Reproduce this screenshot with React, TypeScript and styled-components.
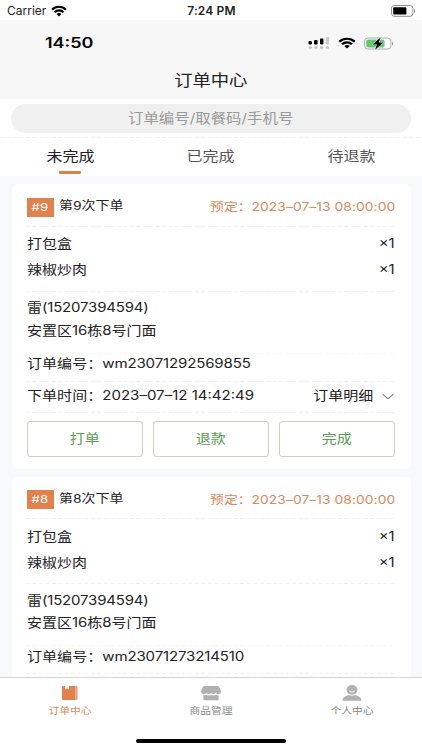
import React from 'react';
import styled, { createGlobalStyle } from 'styled-components';

const Global = createGlobalStyle`
  * { box-sizing: border-box; }
  body { margin: 0; background: #fff; overflow: hidden; }
`;

const Screen = styled.div`
  width: 422px;
  height: 750px;
  display: flex;
  flex-direction: column;
  overflow: hidden;
  background: #fff;
  color: #222;
  font-family: Inter, 'Noto Sans CJK SC', sans-serif;
`;

/* Wide lettering: glyphs are stretched sideways from the given edge. */
const Text = styled.span<{
  $size?: number; $x?: number; $from?: string; $color?: string; $weight?: number; $track?: number;
}>`
  display: inline-block;
  flex: none;
  white-space: pre;
  line-height: 1;
  font-size: ${p => p.$size ?? 12.8}px;
  color: ${p => p.$color ?? '#222'};
  font-weight: ${p => p.$weight ?? 400};
  letter-spacing: ${p => p.$track ?? 0}px;
  transform: scaleX(${p => p.$x ?? 1.17});
  transform-origin: ${p => p.$from ?? 'left'} center;
`;

const Latin = styled.span<{ $track?: number }>`
  letter-spacing: ${p => p.$track ?? 0}px;
`;

const DeviceBar = styled.div`
  height: 20px;
  flex: none;
  display: grid;
  grid-template-columns: 1fr 1fr 1fr;
  align-items: center;
  padding: 1px 6px 0 7px;
`;
const DeviceLeft = styled.div`display: flex; align-items: center; gap: 5px;`;
const DeviceCenter = styled.div`display: flex; justify-content: center;`;
const DeviceRight = styled.div`display: flex; justify-content: flex-end;`;

const Header = styled.header`
  height: 79px;
  flex: none;
  background: #f7f7f7;
`;
const PhoneBar = styled.div`
  height: 46px;
  display: flex;
  align-items: center;
  justify-content: space-between;
  padding: 0 28px 0 45px;
`;
const PhoneIcons = styled.div`display: flex; align-items: center; gap: 8px;`;
const Title = styled.div`
  height: 28.5px;
  display: flex;
  align-items: center;
  justify-content: center;
`;

const SearchArea = styled.div`
  height: 38px;
  flex: none;
  padding: 5px 11px 0;
`;
const Search = styled.div`
  height: 29px;
  border-radius: 15px;
  background: #f0f0f0;
  display: flex;
  align-items: center;
  justify-content: center;
`;

const Dashed = styled.div<{ $color?: string }>`
  height: 1px;
  flex: none;
  background: repeating-linear-gradient(90deg, ${p => p.$color ?? '#f0f0f0'} 0 4px, #fff 4px 6.5px);
`;

const Tabs = styled.nav`
  height: 38px;
  flex: none;
  display: grid;
  grid-template-columns: repeat(3, 1fr);
`;
const Tab = styled.div`
  display: flex;
  flex-direction: column;
  align-items: center;
  padding-top: 12px;
`;
const Underline = styled.i`
  width: 22px;
  height: 3px;
  border-radius: 1px;
  margin-top: 7.3px;
  background: #d8804e;
`;

const List = styled.main`
  height: 501px;
  flex: none;
  overflow: hidden;
  background: #f8f9fb;
  padding: 8px 11.5px 0;
  display: flex;
  flex-direction: column;
  gap: 8px;
`;
const Card = styled.section`
  height: 284.6px;
  flex: none;
  background: #fff;
  border-radius: 6px;
  padding: 0 15.5px;
`;
const Rule = styled(Dashed)`margin: 0 0 0 -1px;`;
const Row = styled.div<{ $h: number; $lift?: number }>`
  height: ${p => p.$h}px;
  padding-bottom: ${p => p.$lift ?? 0}px;
  display: flex;
  align-items: center;
  justify-content: space-between;
`;
const CardHead = styled.div`
  height: 41.5px;
  padding-top: 5px;
  display: flex;
  align-items: center;
  justify-content: space-between;
`;
const HeadLeft = styled.div`display: flex; align-items: center; gap: 5px;`;
const Raised = styled.div`padding-bottom: 2px; display: flex;`;
const Reserved = styled.div`padding-top: 2px; display: flex;`;
const Badge = styled.div`
  width: 26.5px;
  height: 19px;
  background: #e1814d;
  display: flex;
  align-items: center;
  justify-content: center;
`;
const Items = styled.div`padding: 5.5px 0 7.5px;`;
const Customer = styled.div`padding: 5.5px 0 10.5px;`;
const More = styled.div`display: flex; align-items: center; gap: 8px; padding-right: 1.5px;`;
const Actions = styled.div`
  display: grid;
  grid-template-columns: repeat(3, 1fr);
  gap: 10.5px;
  padding-top: 8px;
`;
const Action = styled.div`
  height: 35.5px;
  border: 1px solid #cbd3c4;
  border-radius: 3px;
  display: flex;
  align-items: center;
  justify-content: center;
`;

const TabBar = styled.footer`
  height: 73px;
  flex: none;
  border-top: 1px solid #d6d6d6;
  background: #fff;
`;
const NavItems = styled.div`
  height: 60.5px;
  display: grid;
  grid-template-columns: repeat(3, 1fr);
`;
const NavItem = styled.div`
  display: flex;
  flex-direction: column;
  align-items: center;
  gap: 4.5px;
  padding-top: 7px;
`;
const HomeLine = styled.div`
  width: 150px;
  height: 4.5px;
  border-radius: 3px;
  background: #000;
  margin: 0 auto;
`;

const Wifi = ({ w, h }: { w: number; h: number }) => (
  <svg width={w} height={h} viewBox="0 0 16 12" preserveAspectRatio="none">
    <g fill="none" stroke="#000" strokeWidth="2.1">
      <path d="M1.1 4.7C5 .7 11 .7 14.9 4.7" />
      <path d="M3.6 7.2c2.5-2.4 6.3-2.4 8.8 0" />
    </g>
    <path d="M5.5 9c1.5-1.3 3.5-1.3 5 0L8 11.6z" />
  </svg>
);

const DeviceBattery = () => (
  <svg width="25" height="12" viewBox="0 0 25 12">
    <rect x=".5" y=".5" width="21.4" height="10.8" rx="2.8" fill="#fff" stroke="#8e8e8e" />
    <rect x="2.2" y="2.2" width="13.2" height="7.4" rx="1.2" />
    <path d="M23.2 4v4c1.4-.5 1.4-3.5 0-4z" fill="#888" />
  </svg>
);

const Signal = () => (
  <svg width="22" height="14" viewBox="0 0 22 14">
    <rect x=".5" y="5" width="3.4" height="3.4" rx="1" />
    <rect x="6" y="4" width="3.6" height="4.4" rx="1" />
    <rect x="12" y="2.6" width="3.4" height="5.8" rx=".8" />
    <rect x="17.8" y="1" width="3.4" height="7.4" rx=".8" fill="#cacaca" />
    <g fill="#c2c2c2">
      <rect x=".6" y="10.2" width="3.2" height="2.5" rx="1" />
      <rect x="6.2" y="10.2" width="3.2" height="2.5" rx="1" />
      <rect x="12" y="10.2" width="3.2" height="2.5" rx="1" />
      <rect x="17.8" y="10.2" width="3.2" height="2.5" rx="1" />
    </g>
  </svg>
);

const Charging = () => (
  <svg width="30" height="13" viewBox="0 0 30 13">
    <rect x=".5" y="1" width="26.4" height="11" rx="3.4" fill="#fff" stroke="#a9ada9" />
    <rect x="2.2" y="2.6" width="18.4" height="7.8" rx="1.8" fill="#68c570" />
    <path d="M28.2 5v3.4c1.3-.5 1.3-2.9 0-3.4z" fill="#777" />
    <path d="M16.6.4 8.4 7.5h4.6l-1.9 5.2 8.3-7.3h-4.7z" stroke="#f7f7f7" strokeWidth=".8" paintOrder="stroke" />
  </svg>
);

const Chevron = () => (
  <svg width="12" height="7" viewBox="0 0 12 7" fill="none" stroke="#555" strokeWidth="1">
    <path d="M.4 1 6 5.8 11.6 1" />
  </svg>
);

const BookIcon = () => (
  <svg width="16" height="16" viewBox="0 0 16 16">
    <path d="M1 1h2v3.6l2.1-1.4L7 4.6V1h6.5v14H1.5Q0 15 0 13.5V2Q0 1 1 1z" fill="#e1814d" />
    <path d="M13.5 1h1q1.1 0 1.1 1v12q0 1-1.1 1h-1z" fill="#e8a079" />
  </svg>
);
const ShopIcon = () => (
  <svg width="20" height="16" viewBox="0 0 20 16" fill="#b1b1b1">
    <path d="M3.5 1h13q1.2 0 1.8 1.2L19.8 6c.4 2-.7 3.2-2.4 3.2-1.2 0-2-.5-2.5-1.2C13.7 9.5 11 9.5 10 8 9 9.5 6.3 9.5 5.1 8c-.5.7-1.3 1.2-2.5 1.2C.9 9.2-.2 8 .2 6l1.5-3.8Q2.3 1 3.5 1z" />
    <path d="M2.3 10.4c1.3 0 2.2-.2 2.9-.7 1.4.9 3.5.9 4.8 0 1.3.9 3.4.9 4.8 0 .7.5 1.6.7 2.9.7V14q0 1.3-1.3 1.3H3.6Q2.3 15.3 2.3 14z" />
  </svg>
);
const PersonIcon = () => (
  <svg width="20" height="16" viewBox="0 0 20 16">
    <ellipse cx="10" cy="4.9" rx="5.5" ry="4.8" fill="#b1b1b1" />
    <path d="M.5 15.8c0-3.6 3.5-5.3 6.6-5.9q2.9 1.5 5.8 0c3.1.6 6.6 2.3 6.6 5.9z" fill="#b1b1b1" />
    <path d="M7 5.8q3 2.6 6 0" fill="none" stroke="#fff" strokeWidth=".9" />
  </svg>
);

const OrderFooter = () => (
  <>
    <Row $h={30.5} $lift={1.5}>
      <Text $size={12.6} $x={1.195}>下单时间：<Latin>2023–07–12 14:42:49</Latin></Text>
      <More><Text $from="right">订单明细</Text><Chevron /></More>
    </Row>
    <Rule />
    <Actions>
      {['打单', '退款', '完成'].map(label => (
        <Action key={label}><Text $from="center" $color="#5b9d50">{label}</Text></Action>
      ))}
    </Actions>
  </>
);

const Order = ({ no, code, footer }: { no: number; code: string; footer?: boolean }) => (
  <Card>
    <CardHead>
      <HeadLeft>
        <Badge><Text $size={11} $x={1.2} $color="#fff" $from="center">#{no}</Text></Badge>
        <Raised><Text $size={12} $x={1.16}>第{no}次下单</Text></Raised>
      </HeadLeft>
      <Reserved>
        <Text $size={11.8} $color="#d88a60" $from="right">预定：<Latin $track={0.07}>2023–07–13 08:00:00</Latin></Text>
      </Reserved>
    </CardHead>
    <Rule />
    <Items>
      {['打包盒', '辣椒炒肉'].map(name => (
        <Row $h={25.7} key={name}><Text>{name}</Text><Text $from="right">×1</Text></Row>
      ))}
    </Items>
    <Rule />
    <Customer>
      <Row $h={22.5}><Text>雷<Latin $track={-0.15}>(15207394594)</Latin></Text></Row>
      <Row $h={22.5}><Text>安置区<Latin>16</Latin>栋<Latin>8</Latin>号门面</Text></Row>
    </Customer>
    <Rule $color="#f8f8f8" />
    <Row $h={27} $lift={5.5}><Text $size={12.6} $x={1.195}>订单编号：<Latin $track={-0.13}>wm{code}</Latin></Text></Row>
    <Rule />
    {footer && <OrderFooter />}
  </Card>
);

export default function App() {
  return (
    <Screen>
      <Global />
      <DeviceBar>
        <DeviceLeft><Text $size={12} $x={1}>Carrier</Text><Wifi w={16} h={12} /></DeviceLeft>
        <DeviceCenter><Text $size={12} $x={1} $weight={600} $track={0.15}>7:24 PM</Text></DeviceCenter>
        <DeviceRight><DeviceBattery /></DeviceRight>
      </DeviceBar>
      <Header>
        <PhoneBar>
          <Text $size={14.5} $x={1.24} $weight={600} $color="#000">14:50</Text>
          <PhoneIcons><Signal /><Wifi w={18} h={12} /><Charging /></PhoneIcons>
        </PhoneBar>
        <Title><Text $size={15.4} $x={1.19} $from="center">订单中心</Text></Title>
      </Header>
      <SearchArea>
        <Search><Text $size={13.2} $x={1.17} $from="center" $color="#999">订单编号/取餐码/手机号</Text></Search>
      </SearchArea>
      <Dashed />
      <Tabs>
        <Tab><Text $size={13.7} $from="center">未完成</Text><Underline /></Tab>
        <Tab><Text $size={13.7} $from="center" $color="#555">已完成</Text></Tab>
        <Tab><Text $size={13.7} $from="center" $color="#555">待退款</Text></Tab>
      </Tabs>
      <List>
        <Order no={9} code="23071292569855" footer />
        <Order no={8} code="23071273214510" />
      </List>
      <TabBar>
        <NavItems>
          <NavItem><BookIcon /><Text $size={9} $x={1.2} $from="center" $color="#d88a60">订单中心</Text></NavItem>
          <NavItem><ShopIcon /><Text $size={9} $x={1.2} $from="center" $color="#888">商品管理</Text></NavItem>
          <NavItem><PersonIcon /><Text $size={9} $x={1.2} $from="center" $color="#888">个人中心</Text></NavItem>
        </NavItems>
        <HomeLine />
      </TabBar>
    </Screen>
  );
}
